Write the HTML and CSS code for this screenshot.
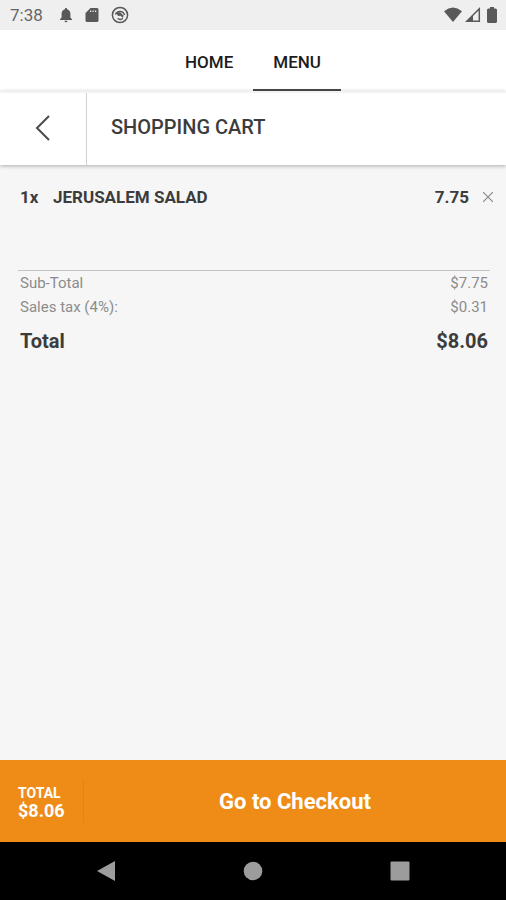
FILE: index.html
```html
<!DOCTYPE html>
<html lang="en">
<head>
<meta charset="utf-8">
<meta name="viewport" content="width=device-width, initial-scale=1">
<title>Shopping Cart</title>
<link rel="stylesheet" href="styles.css">
</head>
<body>
<div class="status">
  <span class="clock">7:38</span>
  <div class="notices">
    <svg width="14" height="16" viewBox="0 0 14 16" aria-hidden="true"><path d="M7 1C6.300 1 5.900 1.500 5.900 2.200C3.700 2.800 2.600 4.500 2.600 6.800V10.500L1 12.200V13H13V12.200L11.400 10.500V6.800C11.400 4.500 10.300 2.800 8.100 2.200C8.100 1.500 7.700 1 7 1ZM5.500 13.800A1.500 1.500 0 0 0 8.500 13.800Z"/></svg>
    <svg width="14" height="16" viewBox="0 0 14 16" aria-hidden="true"><path fill-rule="evenodd" d="M5.500 1H12Q13.500 1 13.500 2.500V13.500Q13.500 15 12 15H2Q.5 15 .5 13.500V6ZM5 3.500V5H6.200V3.500ZM7.500 3.500V5H8.700V3.500ZM10 3.500V5H11.200V3.500Z"/></svg>
    <svg width="18" height="18" viewBox="0 0 18 18" aria-hidden="true"><circle cx="9" cy="9" r="7.600" class="ring"/><path class="ring" d="M4.500 8.500A4.700 4.700 0 0 1 13.500 9M6.500 12.500A4.700 4.700 0 0 0 12 12.500"/><path d="M5.500 7L9 6.200L12.500 9.500L12 12L9.500 9.800L7 10Z"/></svg>
  </div>
  <div class="signals">
    <svg width="20" height="16" viewBox="0 0 20 16" aria-hidden="true"><path d="M1 4.200Q10-3 19 4.200L10 15Z"/></svg>
    <svg width="16" height="16" viewBox="0 0 16 16" aria-hidden="true"><path class="ring" d="M1.800 14.300H14.300V1.800Z"/><path d="M1 15H8V8Z"/></svg>
    <svg width="10" height="16" viewBox="0 0 10 16" aria-hidden="true"><path d="M3 0H7V1.500H8.500Q10 1.500 10 3V14.500Q10 16 8.500 16H1.500Q0 16 0 14.500V3Q0 1.500 1.500 1.500H3Z"/></svg>
  </div>
</div>
<nav class="tabs">
  <a class="tab" href="#home">HOME</a>
  <a class="tab active" href="#menu" aria-current="page">MENU</a>
</nav>
<header class="header">
  <button class="back" type="button" aria-label="Back">
    <svg width="16" height="26" viewBox="0 0 16 26" aria-hidden="true"><path d="M14 1L2 13L14 25"/></svg>
  </button>
  <h1>SHOPPING CART</h1>
</header>
<main class="cart">
  <div class="item">
    <span class="qty">1x</span>
    <span class="name">JERUSALEM SALAD</span>
    <span class="price">7.75</span>
    <button class="remove" type="button" aria-label="Remove">
      <svg width="10" height="10" viewBox="0 0 10 10" aria-hidden="true"><path d="M0 0L10 10M10 0L0 10"/></svg>
    </button>
  </div>
  <dl class="summary">
    <div class="line"><dt>Sub-Total</dt><dd>$7.75</dd></div>
    <div class="line"><dt>Sales tax (4%):</dt><dd>$0.31</dd></div>
    <div class="line total"><dt>Total</dt><dd>$8.06</dd></div>
  </dl>
</main>
<footer class="checkout">
  <div class="sum"><span class="label">TOTAL</span><span class="amount">$8.06</span></div>
  <button class="go" type="button">Go to Checkout</button>
</footer>
<div class="system">
  <button type="button" aria-label="System back"><svg width="20" height="22" viewBox="0 0 20 22" aria-hidden="true"><path d="M1 11L19 1V21Z"/></svg></button>
  <button type="button" aria-label="System home"><svg width="20" height="20" viewBox="0 0 20 20" aria-hidden="true"><circle cx="10" cy="10" r="9.300"/></svg></button>
  <button type="button" aria-label="Recent apps"><svg width="20" height="20" viewBox="0 0 20 20" aria-hidden="true"><rect x=".5" y=".5" width="19" height="19" rx="1"/></svg></button>
</div>
</body>
</html>
```
FILE: styles.css
```css
* { box-sizing: border-box; }

body {
  margin: 0;
  min-height: 100vh;
  display: flex;
  flex-direction: column;
  background: #f6f6f6;
  color: #3c3c3c;
  font-family: Roboto, "Liberation Sans", sans-serif;
}

button {
  display: flex;
  align-items: center;
  justify-content: center;
  padding: 0;
  border: 0;
  background: none;
  color: inherit;
  font: inherit;
}

svg { display: block; }

.status {
  display: flex;
  align-items: center;
  height: 30px;
  padding: 0 9px 0 10px;
  background: #efefef;
  color: #666;
}

.status svg { fill: #595959; }
.status .ring { fill: none; stroke: #595959; stroke-width: 1.5; }
.clock { font-size: 17px; line-height: 20px; }
.notices { display: flex; align-items: center; gap: 12px; margin-left: 16px; }
.signals { display: flex; align-items: center; gap: 2px; margin-left: auto; }
.signals svg:last-child { margin-left: 4px; }

.tabs {
  display: flex;
  justify-content: center;
  height: 61px;
  background: #fff;
}

.tab {
  padding: 0 20px;
  border-bottom: 2px solid transparent;
  color: #1c1c1c;
  font-size: 17px;
  font-weight: 500;
  line-height: 64px;
  text-decoration: none;
}

.active { border-color: #4a4a4a; }

.header {
  display: flex;
  align-items: stretch;
  height: 74px;
  border-top: 2px solid #f3f3f3;
  background: #fff;
  box-shadow: 0 1px 4px rgba(0, 0, 0, 0.3);
}

.back {
  width: 87px;
  padding-bottom: 2px;
  border-right: 1px solid #d2d2d2;
}

.back path { fill: none; stroke: #4a4a4a; stroke-width: 2; }

h1 {
  margin: 0 24px;
  font-size: 20px;
  font-weight: 500;
  line-height: 69px;
}

.cart { flex: 1; padding: 20px 12px 20px 18px; }

.item {
  display: flex;
  align-items: center;
  height: 24px;
  padding-left: 2px;
  font-size: 17px;
  font-weight: 700;
}

.qty { width: 33px; }
.name { flex: 1; }
.remove { width: 12px; height: 24px; margin-left: 13px; }
.remove path { fill: none; stroke: #8a8a8a; stroke-width: 1.2; }

.summary {
  margin: 61px 4px 0 0;
  border-top: 1px solid #c4c4c4;
}

.line {
  display: flex;
  justify-content: space-between;
  padding: 0 2px;
  color: #8c8c8c;
  font-size: 15px;
  line-height: 24px;
}

.line dd { margin: 0; }

.total {
  padding-top: 8px;
  color: #3c3c3c;
  font-size: 20px;
  font-weight: 700;
  line-height: 28px;
}

.checkout {
  display: flex;
  align-items: center;
  height: 82px;
  background: #ef8c18;
  color: #fff;
  font-weight: 700;
}

.sum {
  display: flex;
  flex-direction: column;
  justify-content: center;
  width: 84px;
  height: 44px;
  padding: 2px 0 0 18px;
  border-right: 1px solid #e48213;
}

.label { font-size: 14px; line-height: 18px; }
.amount { font-size: 18px; line-height: 18px; }
.go { flex: 1; height: 100%; font-size: 22px; }

.system {
  display: flex;
  align-items: center;
  justify-content: space-between;
  height: 58px;
  padding: 0 19%;
  background: #000;
}

.system svg { fill: #9c9c9c; }
```
